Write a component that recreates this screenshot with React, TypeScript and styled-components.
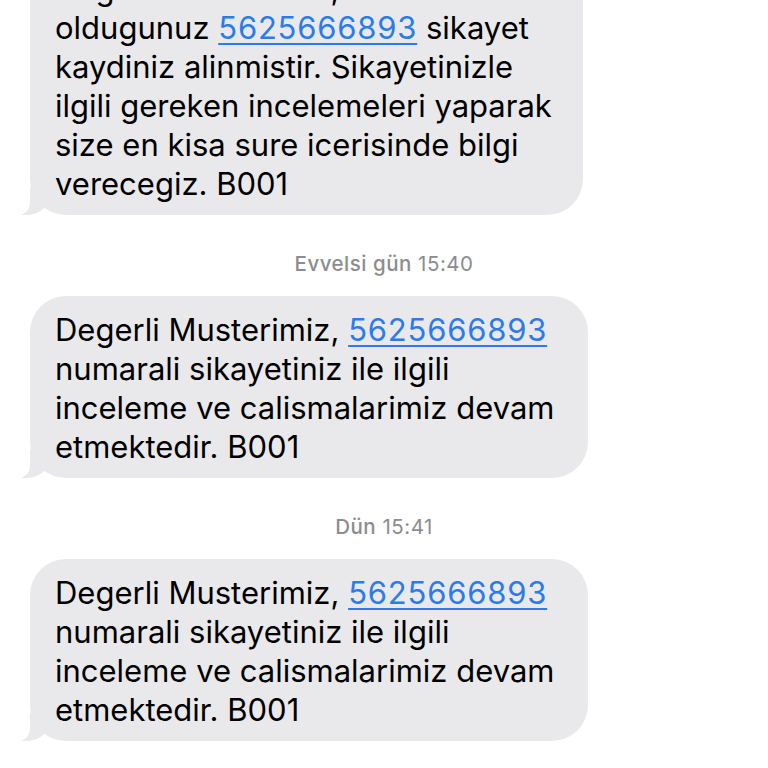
import React from "react";
import styled, { createGlobalStyle } from "styled-components";

const Global = createGlobalStyle`
  html, body { margin: 0; padding: 0; background: #ffffff; }
  body { font-family: Inter, "Noto Sans", "Liberation Sans", sans-serif; -webkit-font-smoothing: antialiased; }
`;

const Screen = styled.div`
  width: 768px;
  height: 768px;
  overflow: hidden;
  background: #ffffff;
`;

const Thread = styled.div`
  display: flex;
  flex-direction: column;
  align-items: flex-start;
  margin-top: -45px;
`;

const Stamp = styled.div`
  align-self: center;
  margin: 37px 0 20px 0;
  font-size: 20.5px;
  line-height: 24px;
  color: #8c8c90;
  letter-spacing: 0.5px;
  & b { font-weight: 500; }
`;

const Bubble = styled.div<{ $w: number }>`
  position: relative;
  box-sizing: border-box;
  width: ${(p) => p.$w}px;
  margin-left: 30px;
  padding: 14px 20px 12px 25px;
  background: #e9e9eb;
  border-radius: 36px;
  color: #000000;
  font-size: 31px;
  line-height: 39px;
  letter-spacing: 0;

  &::before {
    content: "";
    position: absolute;
    left: -8px;
    bottom: 0;
    width: 26px;
    height: 28px;
    background: #e9e9eb;
    border-bottom-right-radius: 22px 16px;
  }
  &::after {
    content: "";
    position: absolute;
    left: -18px;
    bottom: 0;
    width: 18px;
    height: 30px;
    background: #ffffff;
    border-bottom-right-radius: 12px;
  }
`;

const Line = styled.div`
  position: relative;
  z-index: 1;
  white-space: nowrap;
`;

const Link = styled.span`
  color: #2a7ceb;
  letter-spacing: 0.8px;
  text-decoration: underline;
  text-decoration-thickness: 1.5px;
  text-underline-offset: 4px;
`;

const NUM = "5625666893";

export default function App() {
  return (
    <Screen>
      <Global />
      <Thread>
        <Bubble $w={553}>
          <Line>Degerli Musterimiz, iletmis</Line>
          <Line>
            oldugunuz <Link>{NUM}</Link> sikayet
          </Line>
          <Line>kaydiniz alinmistir. Sikayetinizle</Line>
          <Line>ilgili gereken incelemeleri yaparak</Line>
          <Line>size en kisa sure icerisinde bilgi</Line>
          <Line>verecegiz. B001</Line>
        </Bubble>
        <Stamp>
          <b>Evvelsi gün</b> 15:40
        </Stamp>
        <Bubble $w={558}>
          <Line>
            Degerli Musterimiz, <Link>{NUM}</Link>
          </Line>
          <Line>numarali sikayetiniz ile ilgili</Line>
          <Line>inceleme ve calismalarimiz devam</Line>
          <Line>etmektedir. B001</Line>
        </Bubble>
        <Stamp>
          <b>Dün</b> 15:41
        </Stamp>
        <Bubble $w={558}>
          <Line>
            Degerli Musterimiz, <Link>{NUM}</Link>
          </Line>
          <Line>numarali sikayetiniz ile ilgili</Line>
          <Line>inceleme ve calismalarimiz devam</Line>
          <Line>etmektedir. B001</Line>
        </Bubble>
      </Thread>
    </Screen>
  );
}
